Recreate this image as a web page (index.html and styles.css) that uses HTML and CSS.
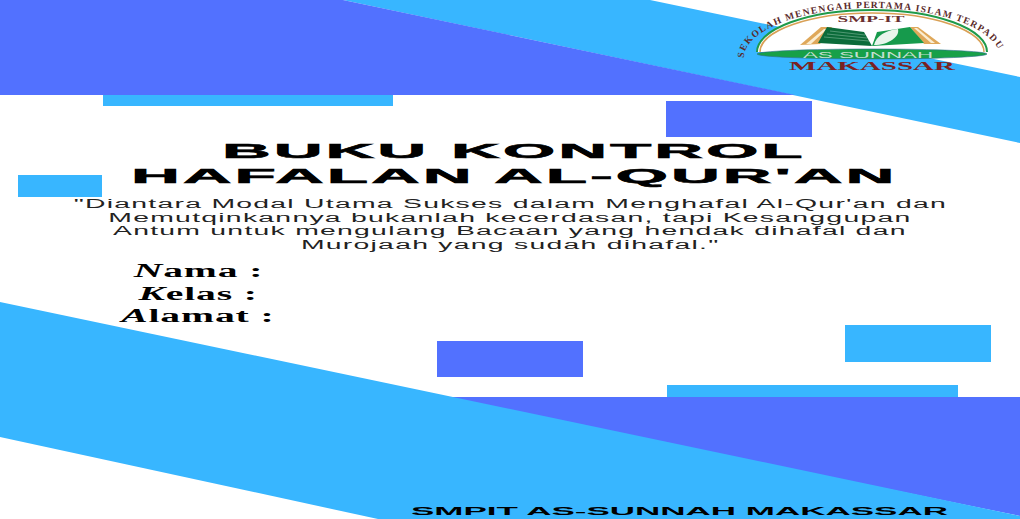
FILE: index.html
```html
<!DOCTYPE html>
<html lang="id">
<head>
<meta charset="utf-8">
<title>Buku Kontrol Hafalan Al-Qur'an</title>
<link rel="stylesheet" href="styles.css">
</head>
<body>
<main class="cover">
  <svg class="shapes" viewBox="0 0 1020 519" aria-hidden="true">
    <polygon class="light" points="343,0 650,0 1020,77 1020,143"/>
    <polygon class="dark" points="0,0 343,0 795,95 0,95"/>
    <rect class="light" x="103" y="95" width="290" height="11"/>
    <rect class="dark" x="666" y="101" width="146" height="36"/>
    <rect class="light" x="18" y="175" width="84" height="22"/>
    <rect class="dark" x="437" y="341" width="146" height="36"/>
    <rect class="light" x="845" y="325" width="146" height="37"/>
    <rect class="light" x="667" y="385" width="291" height="12"/>
    <polygon class="dark" points="437,397 1020,397 1020,516"/>
    <polygon class="light" points="0,302 1020,516 1020,519 378,519 0,437"/>
  </svg>

  <svg class="logo" viewBox="0 0 270 74" aria-label="Logo SMP-IT As Sunnah Makassar">
    <defs><path id="arch" d="M6,58 A128,50 0 0 1 262,58"/></defs>
    <path class="arch-fill" d="M19,52 A115,42 0 0 1 249,52 Z"/>
    <path class="arch-orange" d="M22,52 A112,39 0 0 1 246,52"/>
    <path class="arch-green" d="M19,52 A115,42 0 0 1 249,52"/>
    <text class="arch-text"><textPath href="#arch" textLength="284" lengthAdjust="spacing">SEKOLAH MENENGAH PERTAMA ISLAM TERPADU</textPath></text>
    <text class="smp" x="133" y="22" text-anchor="middle" textLength="67" lengthAdjust="spacingAndGlyphs">SMP-IT</text>
    <polygon class="orange" points="62,45 83,27 94,27 82,44"/>
    <polygon class="cream" points="68,44 86,29 89,29 73,44"/>
    <polygon class="orange" points="172,27 180,27 203,44 186,44"/>
    <polygon class="cream" points="176,28 179,28 197,43 193,43"/>
    <polygon class="page-dark" points="89,27 126,32 134,46 80,43"/>
    <path class="page-lines" d="M92,31 L127,35 M89,34 L129,38 M86,37 L131,41"/>
    <polygon class="page-mid" points="134,46 139,32 172,27 186,43"/>
    <path class="leaf" d="M136,45 C138,36 148,30 160,29 C162,37 150,45 136,45 Z"/>
    <ellipse class="banner" cx="134" cy="54" rx="115" ry="5"/>
    <text class="banner-text" x="130" y="57.5" text-anchor="middle" textLength="130" lengthAdjust="spacingAndGlyphs">AS SUNNAH</text>
    <text class="city" x="134" y="70" text-anchor="middle" textLength="166" lengthAdjust="spacingAndGlyphs">MAKASSAR</text>
  </svg>

  <div class="content">
    <h1 class="title"><span>BUKU KONTROL</span><span>HAFALAN AL-QUR'AN</span></h1>
    <blockquote class="quote">
      <span>"Diantara Modal Utama Sukses dalam Menghafal Al-Qur'an dan</span>
      <span>Memutqinkannya bukanlah kecerdasan, tapi Kesanggupan</span>
      <span>Antum untuk mengulang Bacaan yang hendak dihafal dan</span>
      <span>Murojaah yang sudah dihafal."</span>
    </blockquote>
    <ul class="fields">
      <li><i>N</i>ama :</li>
      <li><i>K</i>elas :</li>
      <li><i>A</i>lamat :</li>
    </ul>
  </div>
  <footer class="footer"><span>SMPIT AS-SUNNAH MAKASSAR</span></footer>
</main>
</body>
</html>
```
FILE: styles.css
```css
* { box-sizing: border-box; }
html, body { margin: 0; padding: 0; background: #fff; }
.cover { position: relative; display: flex; flex-direction: column; width: 1020px; height: 519px; overflow: hidden; background: #fff; }
.shapes { position: absolute; inset: 0; width: 1020px; height: 519px; }
.light { fill: #38b6ff; }
.dark { fill: #5271ff; }

.logo { position: absolute; left: 738px; top: 0; width: 270px; height: 74px; overflow: visible; }
.arch-fill { fill: #fff; }
.arch-orange { fill: none; stroke: #d9a055; stroke-width: 1.5; }
.arch-green { fill: none; stroke: #1f9a4a; stroke-width: 2; }
.arch-text { font: bold 9.5px "Liberation Serif", serif; fill: #5a2a2a; }
.smp { font: bold 9px "Liberation Serif", serif; fill: #6b2f2f; }
.orange { fill: #dfa85a; }
.cream { fill: #fbeed2; }
.page-dark { fill: #0b6b3a; }
.page-lines { fill: none; stroke: #7fb89a; stroke-width: .6; }
.page-mid { fill: #169a4c; }
.leaf { fill: #e8f5ec; }
.banner { fill: #17a048; stroke: #2f6f8f; stroke-width: .6; }
.banner-text { font: 9.5px "Liberation Sans", sans-serif; fill: #c4dfd0; }
.city { font: bold 11.5px "Liberation Serif", serif; fill: #7a2222; }

.content { position: relative; display: flex; flex-direction: column; padding-top: 139px; }
.title { margin: 0; display: flex; flex-direction: column; align-items: center; padding-left: 8px; font: 900 20px/25px "Liberation Sans", sans-serif; color: #000; }
.title span { display: block; transform: scaleX(3.35); letter-spacing: 1px; white-space: nowrap; -webkit-text-stroke: .6px #000; }
.quote { margin: 9px 0 0; display: flex; flex-direction: column; align-items: center; font: 12.5px/13.5px "Liberation Sans", sans-serif; color: #222; }
.quote span { display: block; transform: scaleX(2.27); letter-spacing: .55px; white-space: nowrap; }
.fields { list-style: none; margin: 8px 0 0; padding: 0; width: 396px; display: flex; flex-direction: column; align-items: center; font: bold 18px/22.5px "Liberation Serif", serif; color: #000; }
.fields li { transform: scaleX(2.2); letter-spacing: .4px; white-space: nowrap; }
.fields i { font-style: italic; }
.footer { position: relative; margin-top: auto; margin-bottom: 2px; margin-left: 412px; width: 534px; display: flex; justify-content: center; font: bold 11px/12px "Liberation Sans", sans-serif; color: #000; }
.footer span { display: block; transform: scaleX(3.18); white-space: nowrap; }
```
